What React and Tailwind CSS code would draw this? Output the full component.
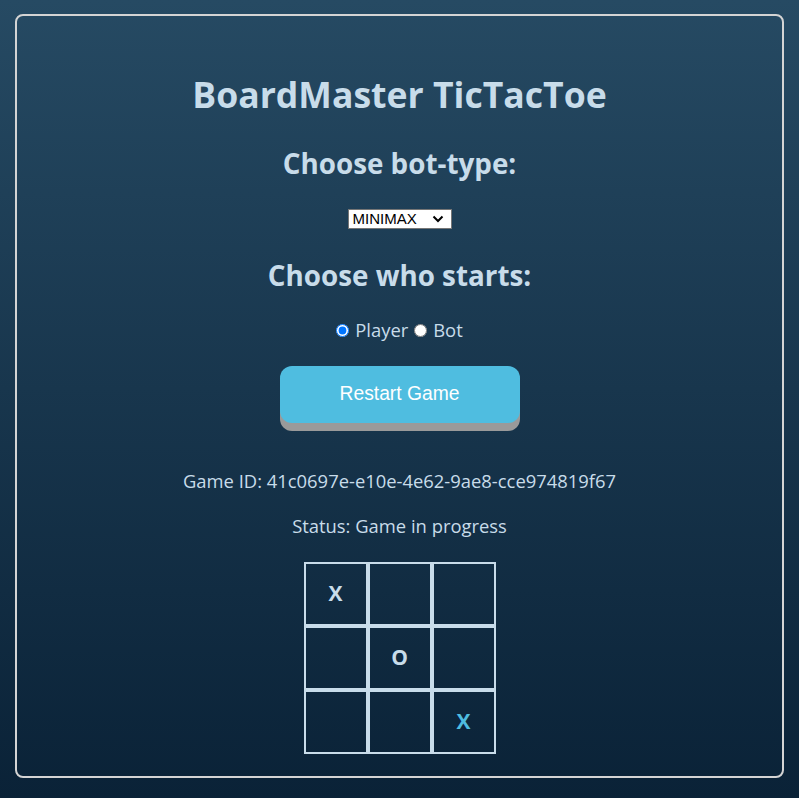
import { useState } from "react";

const board = ["X", "", "", "", "O", "", "", "", "X"];

export default function App() {
  const [starter, setStarter] = useState("player");

  return (
    <div className="min-h-[798px] bg-gradient-to-b from-[#264a63] to-[#0a2237] px-[15px] pt-[14px] pb-[20px] font-['Open_Sans',sans-serif] text-[#c8dcea]">
      <div className="flex flex-col items-center rounded-[8px] border-2 border-[#d4d4d4] pt-[58px] pb-[22px]">
        <h1 className="text-[35.6px] font-bold leading-[40px]">BoardMaster TicTacToe</h1>

        <h2 className="mt-[33px] text-[27.8px] font-bold leading-[32px]">Choose bot-type:</h2>
        <div className="relative mt-[30px] flex">
          <select className="h-[20px] w-[104px] appearance-none border border-[#767676] bg-white pl-[4px] font-['Liberation_Sans',sans-serif] text-[15px] leading-[18px] text-black">
            <option>MINIMAX</option>
            <option>RANDOM</option>
          </select>
          <svg
            className="pointer-events-none absolute right-[8px] top-[6px]"
            width="12"
            height="8"
            viewBox="0 0 12 8"
            fill="none"
          >
            <path d="M1.5 1.5 6 6 10.5 1.5" stroke="#000" strokeWidth="2" />
          </svg>
        </div>

        <h2 className="mt-[30px] text-[27.8px] font-bold leading-[32px]">Choose who starts:</h2>
        <div className="mt-[27px] flex items-center text-[18.4px] leading-[24px]">
          <input
            type="radio"
            name="starter"
            checked={starter === "player"}
            onChange={() => setStarter("player")}
            className="mr-[6px] h-[13px] w-[13px]"
          />
          <span>Player</span>
          <input
            type="radio"
            name="starter"
            checked={starter === "bot"}
            onChange={() => setStarter("bot")}
            className="ml-[6px] mr-[6px] h-[13px] w-[13px]"
          />
          <span>Bot</span>
        </div>

        <button className="mt-[24px] h-[57px] w-[240px] rounded-[12px] bg-[#4fbde0] font-['Liberation_Sans',sans-serif] text-[19.3px] text-white shadow-[0_8px_0_#9a9a9a]">
          Restart Game
        </button>

        <p className="mt-[46px] text-[18.4px] leading-[24px]">Game ID: 41c0697e-e10e-4e62-9ae8-cce974819f67</p>
        <p className="mt-[21px] text-[18.4px] leading-[24px]">Status: Game in progress</p>

        {/* Board */}
        <div className="mt-[24px] grid grid-cols-[repeat(3,64px)]">
          {board.map((cell, i) => (
            <div
              key={i}
              className={`flex h-[64px] w-[64px] items-center justify-center border-2 border-[#c8dcea] text-[21px] font-bold ${
                i === 8 ? "text-[#4fbde0]" : "text-[#c8dcea]"
              }`}
            >
              {cell}
            </div>
          ))}
        </div>
      </div>
    </div>
  );
}
